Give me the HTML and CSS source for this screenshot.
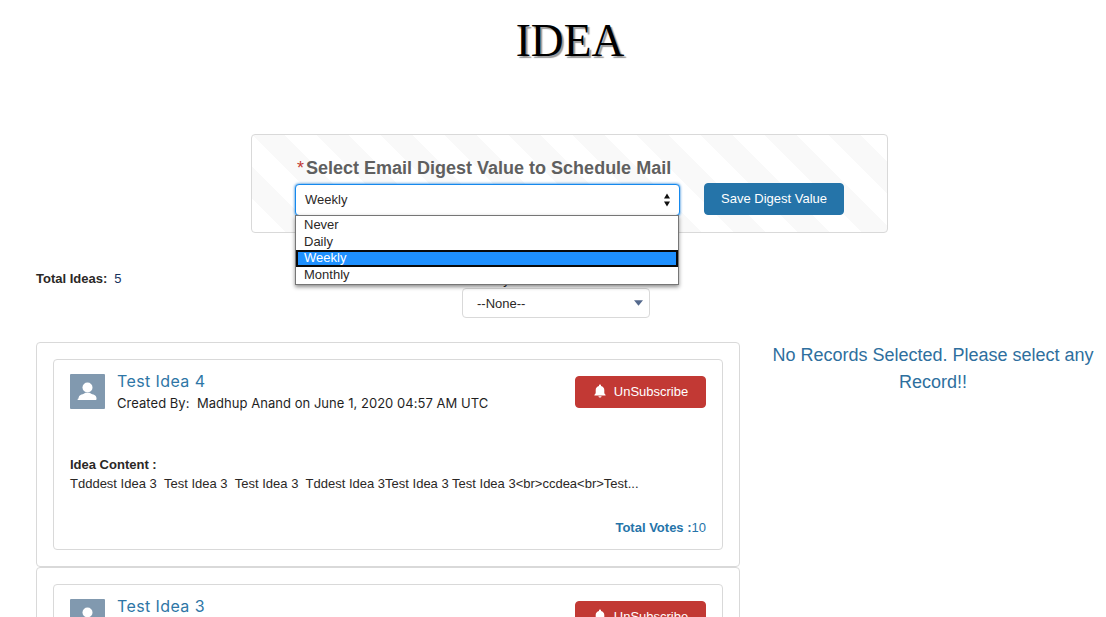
FILE: index.html
```html
<!DOCTYPE html>
<html lang="en">
<head>
    <meta charset="UTF-8">
    <title>Idea</title>
    <link rel="stylesheet" href="styles.css">
</head>
<body>
    <h1 class="page-title">IDEA</h1>

    <div class="digest-panel">
        <div class="digest-field">
            <div class="digest-label"><span class="required">*</span>Select Email Digest Value to Schedule Mail</div>
            <div class="digest-select">
                <span class="select-value">Weekly</span>
                <svg class="updown" viewBox="0 0 8 16" width="8" height="16"><path d="M4 1.500 7 6.500H1zM4 14.500 1 9.500h6z"/></svg>
                <div class="digest-options">
                    <div class="option">Never</div>
                    <div class="option">Daily</div>
                    <div class="option selected">Weekly</div>
                    <div class="option">Monthly</div>
                </div>
            </div>
        </div>
        <button class="btn-save">Save Digest Value</button>
    </div>

    <div class="toolbar">
        <div class="total-ideas"><b>Total Ideas:</b><span class="total-count">5</span></div>
        <div class="filter">
            <div class="filter-label">Filter By</div>
            <div class="filter-select">
                <span>--None--</span>
                <svg viewBox="0 0 10 6" width="9" height="6"><path d="M0 0h10L5 6z"/></svg>
            </div>
        </div>
    </div>

    <div class="main">
        <div class="idea-list">
            <div class="idea-wrap">
                <div class="idea-card">
                    <div class="idea-head">
                        <div class="avatar">
                            <svg viewBox="0 0 35 35" width="35" height="35"><circle cx="17.500" cy="13.500" r="5"/><path d="M8.500 24.500c0-2 1-3.300 3-4 1.800-.6 3-1 3.800-1.800h4.400c.8.8 2 1.200 3.800 1.800 2 .7 3 2 3 4v.5c0 .6-.4 1-1 1h-17c-.6 0-1-.4-1-1z"/></svg>
                        </div>
                        <div class="idea-meta">
                            <div class="idea-title">Test Idea 4</div>
                            <div class="idea-author">Created By: &nbsp;Madhup Anand on June 1, 2020 04:57 AM UTC</div>
                        </div>
                        <button class="btn-unsub">
                            <svg viewBox="0 0 14 14" width="14" height="14"><path d="M7 .6c.6 0 1 .4 1 1v.5c2 .4 3.300 2 3.300 4v2.300c0 1 .5 1.600 1.200 2.300.3.300.1.800-.3.800H1.800c-.4 0-.6-.5-.3-.8.700-.7 1.200-1.300 1.200-2.300V6.100c0-2 1.300-3.600 3.300-4v-.5c0-.6.4-1 1-1zM5.400 12.200h3.200C8.500 13 7.800 13.600 7 13.600s-1.500-.6-1.600-1.400z"/></svg>
                            UnSubscribe
                        </button>
                    </div>
                    <div class="idea-content">
                        <div class="content-label">Idea Content :</div>
                        <div class="content-text">Tdddest Idea 3 &nbsp;Test Idea 3 &nbsp;Test Idea 3 &nbsp;Tddest Idea 3Test Idea 3 Test Idea 3&lt;br&gt;ccdea&lt;br&gt;Test...</div>
                    </div>
                    <div class="idea-votes"><b>Total Votes :</b>10</div>
                </div>
            </div>
            <div class="idea-wrap">
                <div class="idea-card">
                    <div class="idea-head">
                        <div class="avatar">
                            <svg viewBox="0 0 35 35" width="35" height="35"><circle cx="17.500" cy="13.500" r="5"/><path d="M8.500 24.500c0-2 1-3.300 3-4 1.800-.6 3-1 3.800-1.800h4.400c.8.8 2 1.200 3.800 1.800 2 .7 3 2 3 4v.5c0 .6-.4 1-1 1h-17c-.6 0-1-.4-1-1z"/></svg>
                        </div>
                        <div class="idea-meta">
                            <div class="idea-title">Test Idea 3</div>
                            <div class="idea-author">Created By: &nbsp;Madhup Anand on June 1, 2020 04:57 AM UTC</div>
                        </div>
                        <button class="btn-unsub">
                            <svg viewBox="0 0 14 14" width="14" height="14"><path d="M7 .6c.6 0 1 .4 1 1v.5c2 .4 3.300 2 3.300 4v2.300c0 1 .5 1.600 1.200 2.300.3.300.1.800-.3.800H1.800c-.4 0-.6-.5-.3-.8.700-.7 1.200-1.300 1.200-2.300V6.100c0-2 1.300-3.600 3.300-4v-.5c0-.6.4-1 1-1zM5.400 12.200h3.200C8.500 13 7.800 13.600 7 13.600s-1.500-.6-1.600-1.400z"/></svg>
                            UnSubscribe
                        </button>
                    </div>
                </div>
            </div>
        </div>
        <div class="no-records">No Records Selected. Please select any Record!!</div>
    </div>
</body>
</html>
```

FILE: styles.css
```css
html {
    overflow: hidden;
}

body {
    margin: 0;
    font-family: "Liberation Sans", Arial, sans-serif;
    font-size: 13px;
    color: #2b2826;
    background: #fff;
}

.page-title {
    margin: 0;
    padding-top: 13px;
    padding-left: 34px;
    height: 134px;
    box-sizing: border-box;
    text-align: center;
    font-family: "Liberation Serif", serif;
    font-size: 45.5px;
    line-height: 55px;
    font-weight: 400;
    color: #000;
    text-shadow: 2px 2px 1px #999;
}

.digest-panel {
    box-sizing: border-box;
    width: 637px;
    height: 99px;
    margin-left: 251px;
    padding: 24px 0 0 43px;
    display: flex;
    align-items: flex-start;
    gap: 24px;
    border: 1px solid #d9d9d9;
    border-radius: 4px;
    background-color: #fff;
    background-image: linear-gradient(45deg, rgba(0, 0, 0, .025) 25%, transparent 25%, transparent 50%, rgba(0, 0, 0, .025) 50%, rgba(0, 0, 0, .025) 75%, transparent 75%, transparent);
    background-size: 64px 64px;
}

.digest-field {
    width: 385px;
}

.digest-label {
    padding-left: 2px;
    height: 25px;
    line-height: 18px;
    font-size: 18px;
    font-weight: 700;
    color: #5f5f5f;
    white-space: nowrap;
}

.required {
    color: #c23934;
    font-weight: 400;
    margin-right: 2px;
}

.digest-select {
    position: relative;
    box-sizing: border-box;
    height: 32px;
    padding: 0 9px;
    display: flex;
    align-items: center;
    justify-content: space-between;
    border: 1px solid #1589ee;
    border-radius: 4px;
    background: #fff;
    box-shadow: 0 0 3px #0070d2;
}

.select-value {
    margin-top: -2px;
}

.updown {
    fill: #111;
    margin-right: -1px;
}

.digest-options {
    position: absolute;
    z-index: 5;
    top: 30px;
    left: -1px;
    right: 0;
    box-sizing: border-box;
    padding-top: 1px;
    height: 70px;
    border: 1px solid #767676;
    background: #fff;
    box-shadow: 0 2px 4px rgba(0, 0, 0, .45);
}

.option {
    height: 16.5px;
    line-height: 16.5px;
    padding-left: 8px;
}

.option.selected {
    box-sizing: border-box;
    background: #1e90ff;
    color: #fff;
    padding-left: 6px;
    border: 2px solid #0a0a0a;
    line-height: 12.5px;
}

.btn-save {
    margin-top: 24px;
    width: 140px;
    height: 32px;
    padding: 0 0 2px;
    font: inherit;
    color: #fff;
    background: #2574a9;
    border: 1px solid #2574a9;
    border-radius: 4px;
}

.toolbar {
    display: flex;
    align-items: flex-start;
    height: 109px;
    padding-left: 36px;
    box-sizing: border-box;
}

.total-ideas {
    width: 426px;
    padding-top: 39px;
    line-height: 14px;
}

.total-count {
    margin-left: 7px;
    color: #16325c;
}

.filter-label {
    height: 15px;
    padding-top: 40px;
    line-height: 14px;
}

.filter-select {
    box-sizing: border-box;
    width: 188px;
    height: 30px;
    padding: 0 6px 0 14px;
    display: flex;
    align-items: center;
    justify-content: space-between;
    border: 1px solid #d9d9d9;
    border-radius: 4px;
    background: #fff;
}

.filter-select svg {
    fill: #54698d;
}

.main {
    display: flex;
    align-items: flex-start;
    padding-left: 36px;
}

.idea-list {
    width: 704px;
    flex: none;
}

.idea-wrap {
    box-sizing: border-box;
    padding: 16px;
    border: 1px solid #d9d9d9;
    border-radius: 4px;
}

.idea-card {
    box-sizing: border-box;
    height: 191px;
    padding: 14px 16px;
    border: 1px solid #d9d9d9;
    border-radius: 4px;
    background: #fff;
}

.idea-head {
    display: flex;
    align-items: flex-start;
}

.avatar {
    flex: none;
    width: 35px;
    height: 35px;
    background: #8199af;
    border-radius: 1px;
    margin-right: 12px;
}

.avatar svg {
    display: block;
    fill: #fff;
}

.idea-meta {
    flex: 1;
    margin-top: -3px;
    font-family: Inter, "Open Sans", sans-serif;
}

.idea-title {
    font-size: 16px;
    line-height: 20px;
    letter-spacing: .4px;
    color: #2e76a6;
}

.idea-author {
    margin-top: 4px;
    font-size: 13px;
    line-height: 16px;
    letter-spacing: .04px;
    color: #1f1f1f;
}

.btn-unsub {
    flex: none;
    width: 131px;
    height: 32px;
    margin-top: 2px;
    padding: 0 0 2px;
    display: flex;
    align-items: center;
    justify-content: center;
    gap: 7px;
    font: inherit;
    color: #fff;
    background: #c23934;
    border: 1px solid #c23934;
    border-radius: 4px;
}

.btn-unsub svg {
    fill: #fff;
}

.idea-content {
    margin-top: 44px;
    line-height: 19px;
}

.content-label {
    font-weight: 700;
}

.idea-votes {
    margin-top: 27px;
    text-align: right;
    line-height: 16px;
    color: #2574a9;
}

.no-records {
    width: 326px;
    margin-left: 30px;
    text-align: center;
    font-size: 18px;
    line-height: 27px;
    color: #2e6f9e;
}
```
